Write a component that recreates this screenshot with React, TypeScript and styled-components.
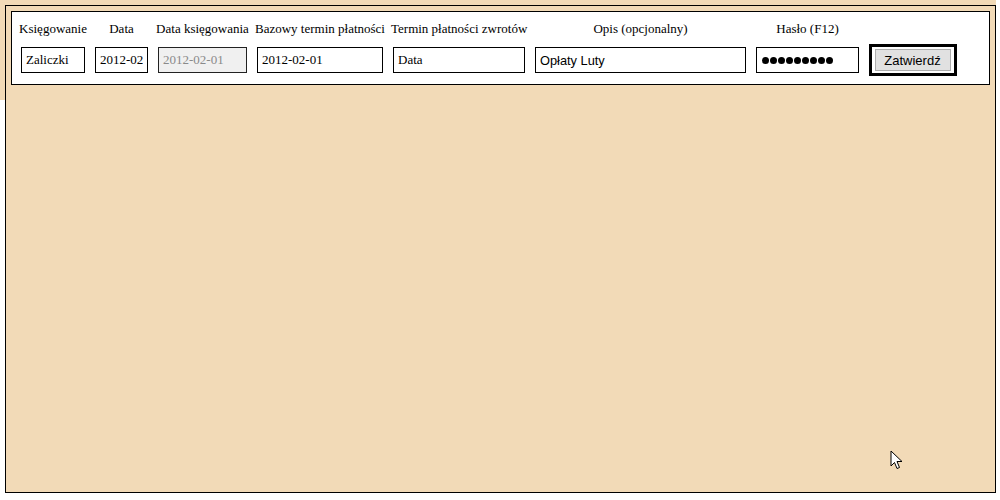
import React from "react";
import styled, { createGlobalStyle } from "styled-components";

const Global = createGlobalStyle`
  html, body { margin: 0; padding: 0; background: #ffffff; }
  body {
    font-family: "Liberation Serif", "Times New Roman", serif;
    background: linear-gradient(#f2dab7, #f2dab7) no-repeat 0 0 / 996px 100px, #ffffff;
  }
`;

const WHEAT = "#f2dab7";

const Frame = styled.div`
  box-sizing: border-box;
  margin: 5px 0 0 5px;
  width: 991px;
  height: 488px;
  border: 1px solid #000;
  background: ${WHEAT};
  padding: 5px;
  position: relative;
`;

const Panel = styled.form`
  box-sizing: border-box;
  margin: 0;
  background: #fff;
  border: 1px solid #000;
  padding: 9px 7px 8px 7px;
  display: grid;
  grid-template-columns: 68px 57px 93px 130px 136px 215px 107px 91px;
  grid-template-rows: 15px 32px;
  column-gap: 6px;
  row-gap: 8px;
  align-items: center;
`;

const Label = styled.label`
  font-family: "Liberation Serif", "Times New Roman", serif;
  font-size: 13px;
  line-height: 15px;
  color: #000;
  text-align: center;
  white-space: nowrap;
`;

const Field = styled.input<{ $w: number; $sans?: boolean }>`
  box-sizing: border-box;
  justify-self: center;
  width: ${(p) => p.$w}px;
  height: 26px;
  margin: 0;
  padding: 0 4px;
  border: 1px solid #000;
  border-radius: 0;
  background: #fff;
  color: #000;
  font-family: ${(p) =>
    p.$sans ? `"Liberation Sans", Arial, sans-serif` : `"Liberation Serif", "Times New Roman", serif`};
  font-size: ${(p) => (p.$sans ? "12.8px" : "13px")};
  outline: none;
  &:disabled {
    background: #f0f0f0;
    color: #8a8a8a;
    border-color: #222;
  }
`;

const Dots = styled.div`
  box-sizing: border-box;
  justify-self: center;
  width: 103px;
  height: 26px;
  border: 1px solid #000;
  background: #fff;
  padding: 0 0 0 5px;
  display: flex;
  align-items: center;
  gap: 1px;
`;

const Dot = styled.span`
  width: 7px;
  height: 7px;
  border-radius: 50%;
  background: #000;
  flex: none;
`;

const SubmitWrap = styled.div`
  box-sizing: border-box;
  justify-self: center;
  width: 88px;
  height: 32px;
  border: 3px solid #000;
  padding: 2px 3px 3px 3px;
  display: flex;
  align-items: flex-start;
`;

const Submit = styled.button`
  box-sizing: border-box;
  width: 77px;
  height: 22px;
  margin: 0;
  padding: 0;
  border: 1px solid #adadad;
  background: #e1e1e1;
  color: #000;
  font-family: "Liberation Sans", Arial, sans-serif;
  font-size: 13px;
  border-radius: 0;
`;

const Cursor = styled.svg`
  position: absolute;
  left: 884px;
  top: 444px;
  width: 14px;
  height: 20px;
`;

export default function App() {
  const labels = [
    "Księgowanie",
    "Data",
    "Data księgowania",
    "Bazowy termin płatności",
    "Termin płatności zwrotów",
    "Opis (opcjonalny)",
    "Hasło (F12)",
    "",
  ];
  return (
    <>
      <Global />
      <Frame>
        <Panel onSubmit={(e) => e.preventDefault()}>
          {labels.map((l, i) => (
            <Label key={i}>{l}</Label>
          ))}
          <Field $w={64} defaultValue="Zaliczki" />
          <Field $w={53} defaultValue="2012-02" />
          <Field $w={89} defaultValue="2012-02-01" disabled />
          <Field $w={126} defaultValue="2012-02-01" />
          <Field $w={132} defaultValue="Data" />
          <Field $w={211} $sans defaultValue="Opłaty Luty" />
          <Dots>
            {Array.from({ length: 9 }).map((_, i) => (
              <Dot key={i} />
            ))}
          </Dots>
          <SubmitWrap>
            <Submit type="submit">Zatwierdź</Submit>
          </SubmitWrap>
        </Panel>
        <Cursor viewBox="0 0 14 20">
          <path
            d="M1 1 L1 16 L4.5 12.5 L7 18.5 L9.5 17.5 L7 11.5 L12 11.5 Z"
            fill="#fff"
            stroke="#000"
            strokeWidth="1"
            strokeLinejoin="miter"
          />
        </Cursor>
      </Frame>
    </>
  );
}
